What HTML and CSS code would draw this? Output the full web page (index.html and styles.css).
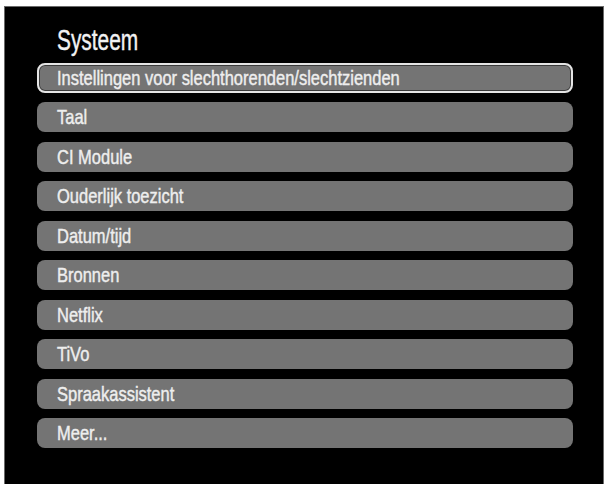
FILE: index.html
```html
<!DOCTYPE html>
<html lang="nl">
<head>
<meta charset="utf-8">
<title>Systeem</title>
<link rel="stylesheet" href="styles.css">
</head>
<body>
<div class="screen">
  <h1 class="title"><span class="cond-title">Systeem</span></h1>
  <ul class="menu">
    <li class="item selected"><span class="label">Instellingen voor slechthorenden/slechtzienden</span></li>
    <li class="item"><span class="label">Taal</span></li>
    <li class="item"><span class="label">CI Module</span></li>
    <li class="item"><span class="label">Ouderlijk toezicht</span></li>
    <li class="item"><span class="label">Datum/tijd</span></li>
    <li class="item"><span class="label">Bronnen</span></li>
    <li class="item"><span class="label">Netflix</span></li>
    <li class="item"><span class="label">TiVo</span></li>
    <li class="item"><span class="label">Spraakassistent</span></li>
    <li class="item"><span class="label">Meer...</span></li>
  </ul>
</div>
</body>
</html>
```

FILE: styles.css
```css
html, body {
  margin: 0;
  padding: 0;
  background: #ffffff;
  height: 100%;
  overflow: hidden;
}

body {
  padding: 6px 2px 0 4px;
  box-sizing: border-box;
  font-family: "Liberation Sans", Arial, sans-serif;
}

.screen {
  width: 600px;
  height: 478px;
  box-sizing: border-box;
  background: #000000;
  border: 1px solid #6a6a6a;
  border-bottom: none;
  padding: 16px 0 0 32px;
}

.title {
  margin: 0 0 5.5px 20px;
  font-size: 29px;
  line-height: 34px;
  font-weight: normal;
  color: #f2f2f2;
}

.cond-title {
  display: inline-block;
  transform: scaleX(0.72);
  transform-origin: left center;
  -webkit-text-stroke: 0.4px #f2f2f2;
}

.menu {
  list-style: none;
  margin: 0;
  padding: 0;
  width: 536px;
  display: flex;
  flex-direction: column;
  gap: 9.5px;
}

.item {
  height: 30px;
  box-sizing: border-box;
  background: #747474;
  border-radius: 8px;
  padding-left: 20px;
  color: #eeeeee;
  font-size: 21px;
  font-weight: normal;
  line-height: 30px;
  white-space: nowrap;
}

.item.selected {
  border: 2px solid #e4e4e4;
  box-shadow: inset 0 0 0 1px #3a3a3a;
  padding-left: 18px;
  line-height: 26px;
}

.label {
  display: inline-block;
  transform: scaleX(0.785);
  transform-origin: left center;
  -webkit-text-stroke: 0.45px #eeeeee;
}
```
